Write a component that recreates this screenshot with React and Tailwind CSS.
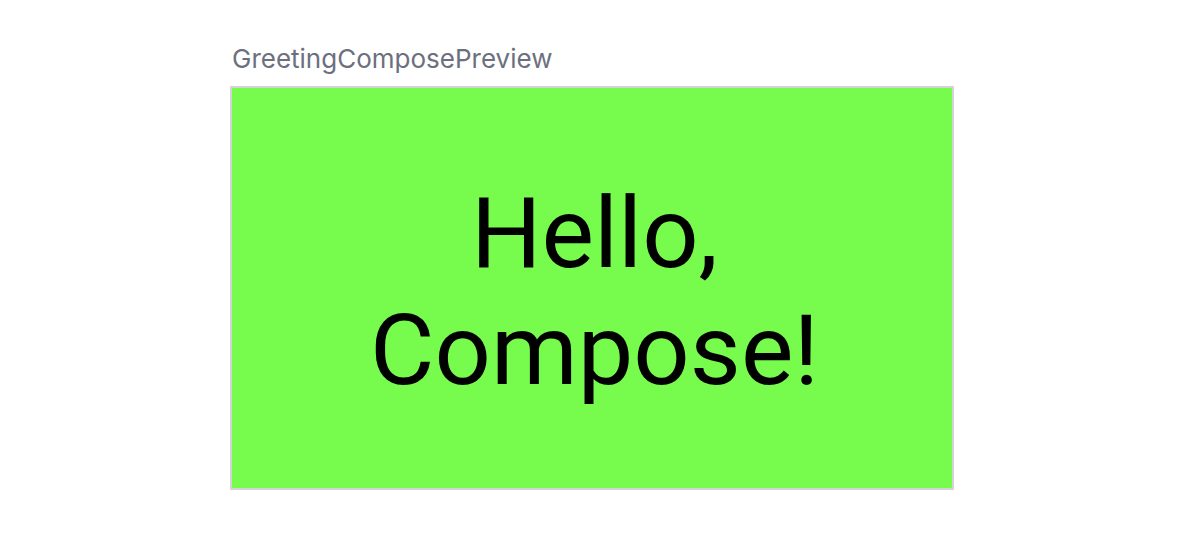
export default function App() {
  return (
    <div className="w-[1184px] h-[534px] bg-white relative">
      <div className="pt-[42px] pl-[230px] flex flex-col">
        <div
          className="pl-[2px] text-[26px] leading-[34px] text-[#6c707e] h-[44px]"
          style={{ fontFamily: "Inter, 'Noto Sans', sans-serif" }}
        >
          GreetingComposePreview
        </div>
        <div className="w-[724px] h-[404px] border-2 border-[#d3d3d3] bg-[#77fb4d] flex items-center justify-center">
          <div
            className="text-center text-black text-[99px] leading-[117px] pl-[5px] pt-[8px]"
            style={{ fontFamily: "Roboto, sans-serif" }}
          >
            Hello,
            <br />
            Compose!
          </div>
        </div>
      </div>
    </div>
  );
}
